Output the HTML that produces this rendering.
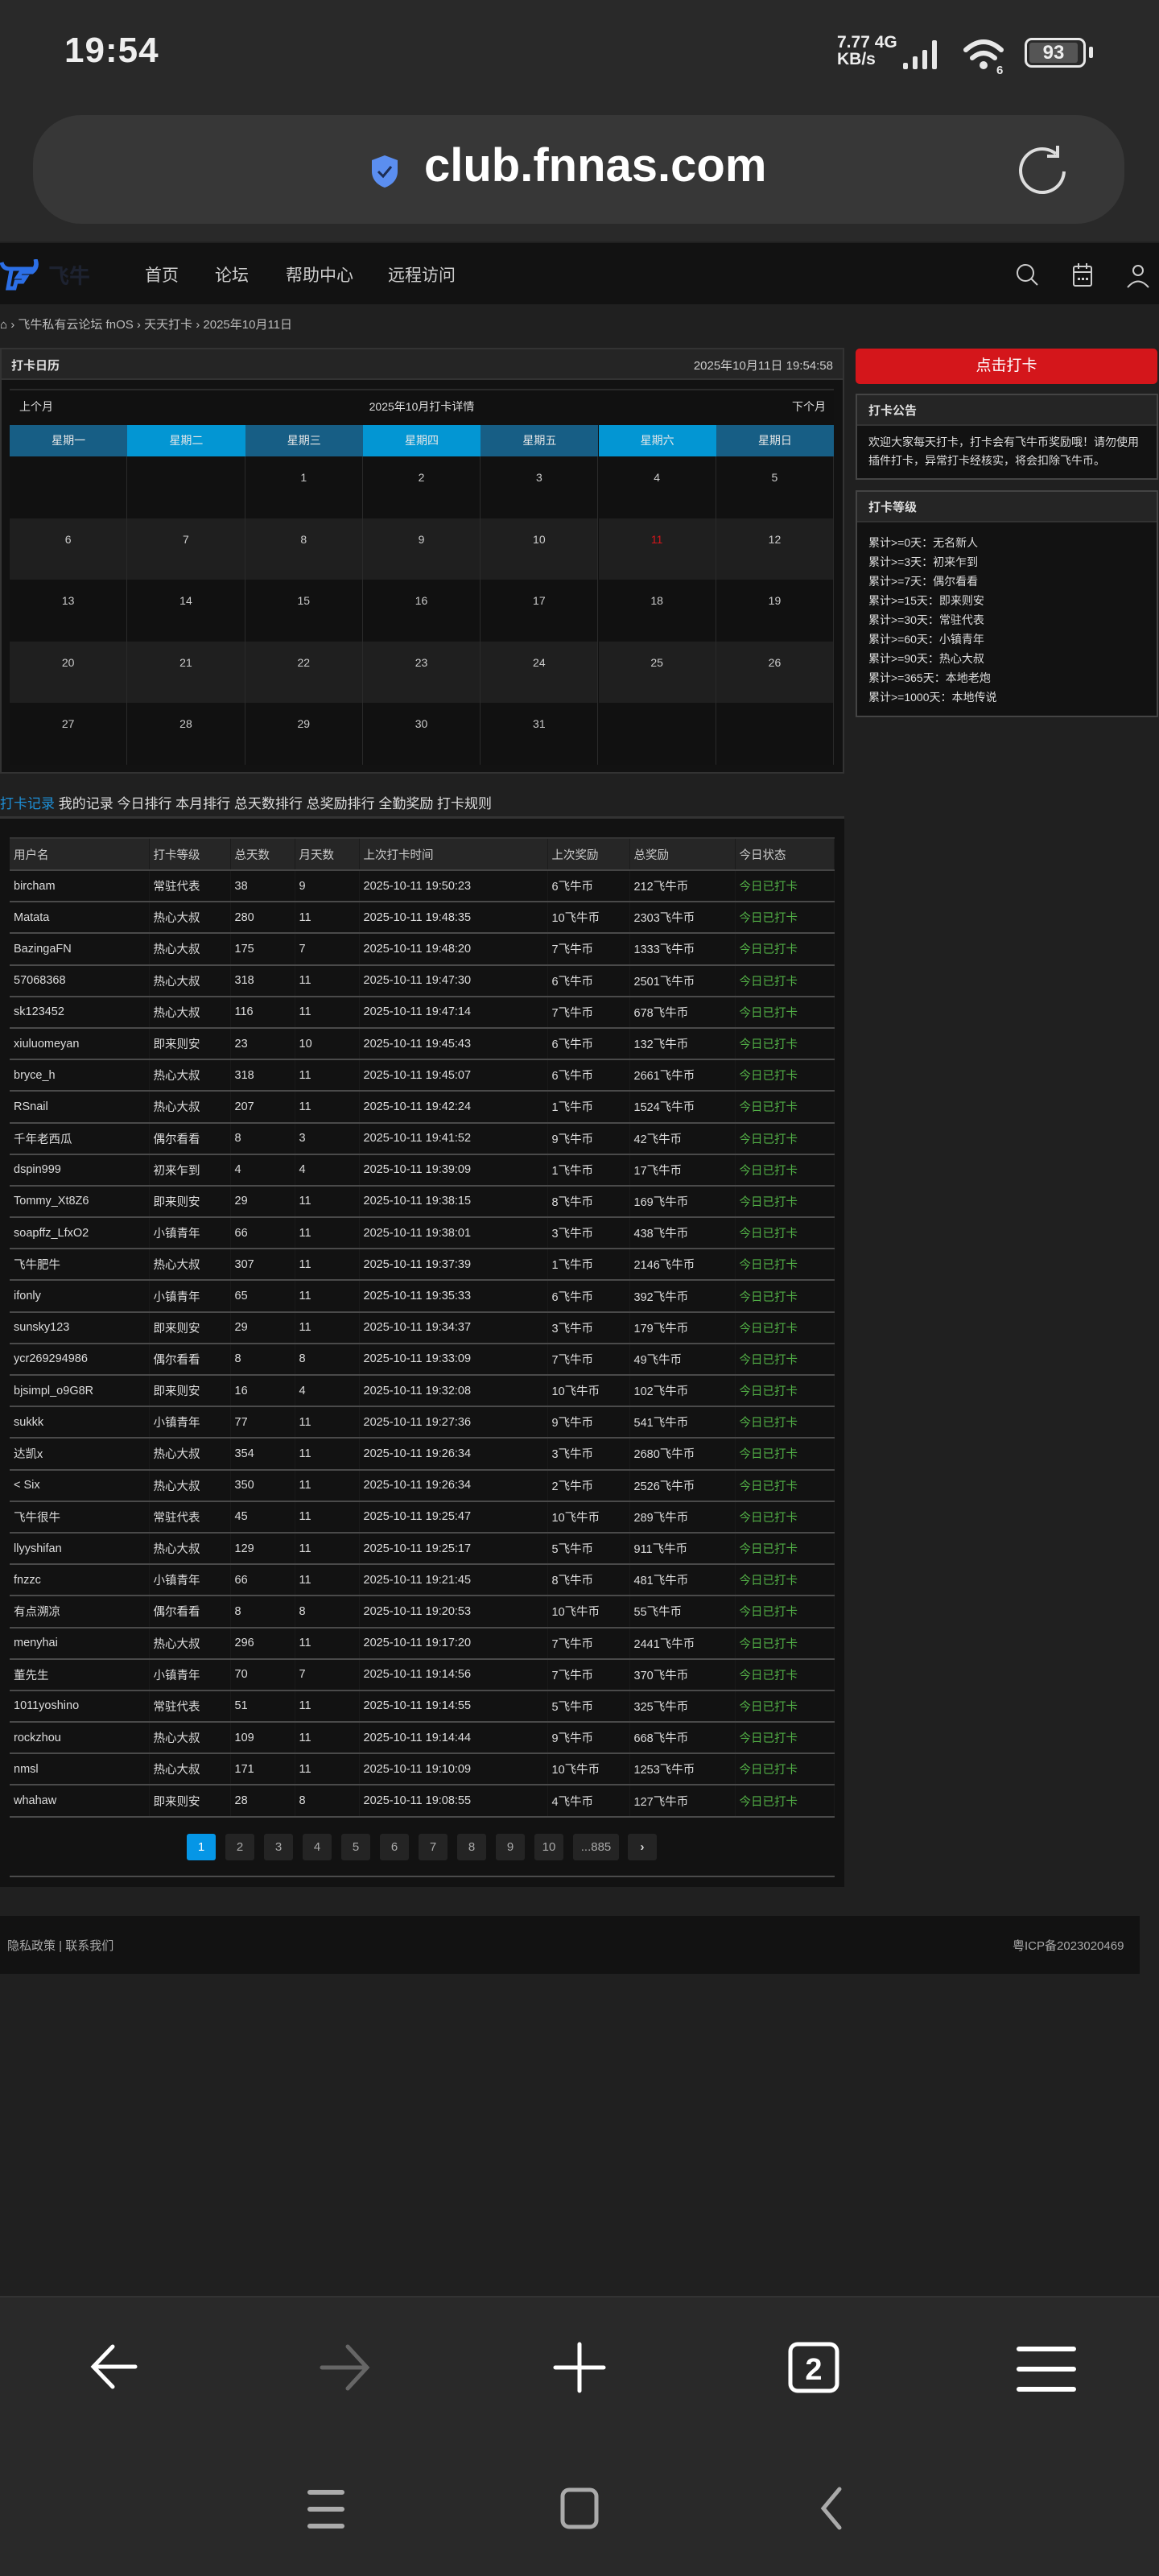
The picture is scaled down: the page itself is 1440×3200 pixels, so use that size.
<!DOCTYPE html>
<html><head><meta charset="utf-8">
<style>
*{margin:0;padding:0;box-sizing:border-box}
body{width:1440px;height:3200px;background:#202020;font-family:"Liberation Sans","Noto Sans CJK SC",sans-serif;color:#ddd;position:relative;overflow:hidden}
.abs{position:absolute}
.status{left:0;top:0;width:1440px;height:300px;background:#292929}
.url{left:41px;top:143px;width:1356px;height:135px;border-radius:60px;background:#373737}
.nav{left:0;top:302px;width:1440px;height:76px;background:#121212}
.nav .it{position:absolute;top:24px;font-size:21px;color:#ccc}
.crumb{left:0;top:392px;font-size:15px;color:#bbb;white-space:nowrap}
.lp{left:0;top:432px;width:1049px;height:529px;background:#121212;border:2px solid #333}
.lph{position:absolute;left:0;top:0;width:1045px;height:38px;background:#252525;border-bottom:2px solid #333;font-size:15px}
.cal{left:12px;top:483px;width:1024px}
.wd{position:absolute;top:43px;height:39px;width:146.3px;text-align:center;line-height:39px;font-size:14px;color:#e8e8e8}
.cell{position:absolute;width:146.3px;height:76.6px;border-right:1px solid #2a2a2a;text-align:center;padding-top:18px;font-size:14px;color:#ccc}
.box{position:absolute;left:1063px;width:376px;background:#121212;border:2px solid #444}
.box .h{height:38px;background:#252525;border-bottom:2px solid #333;font-size:15px;font-weight:bold;padding:8px 14px;color:#ddd}
.rp{left:0;top:1014px;width:1049px;height:1330px;background:#121212;border-top:3px solid #333}
table{position:absolute;left:12px;top:1040px;width:1025px;border-collapse:collapse;font-size:14.5px}
th{height:40px;background:#262626;text-align:left;font-weight:normal;color:#ccc;padding-left:5px;border-top:2px solid #333;border-bottom:2px solid #444;border-right:1px solid #1c1c1c}
td{height:39.2px;padding-left:5px;color:#ddd;border-bottom:2px solid #4a4a4a;border-right:1px solid #1a1a1a}
td.g{color:#52b046}
.pg{position:absolute;top:2278px;height:33px;width:36px;background:#242424;border-radius:3px;color:#aaa;font-size:15px;text-align:center;line-height:33px}
</style></head><body>
<div class="abs status"></div>
<div class="abs" style="left:80px;top:38px;font-size:44px;font-weight:bold;color:#eee;letter-spacing:1px">19:54</div>
<div class="abs" style="left:1040px;top:42px;font-size:21px;font-weight:bold;color:#eee;line-height:21px">7.77 4G<br>KB/s</div>
<svg class="abs" style="left:1120px;top:48px" width="140" height="46" viewBox="0 0 140 46">
<g fill="#e8e8e8"><rect x="2" y="30" width="6" height="8" rx="2"/><rect x="14" y="22" width="6" height="16" rx="2"/><rect x="26" y="14" width="6" height="24" rx="2"/><rect x="38" y="2" width="6" height="36" rx="2"/></g>
<g fill="none" stroke="#e8e8e8" stroke-width="6" stroke-linecap="round"><path d="M80 14 Q102 -6 124 14"/><path d="M88 24 Q102 12 116 24"/></g>
<circle cx="102" cy="33" r="5" fill="#e8e8e8"/><text x="118" y="44" font-size="15" font-weight="bold" fill="#e8e8e8" font-family="Liberation Sans">6</text>
</svg>
<div class="abs" style="left:1273px;top:47px;width:76px;height:37px;border:3px solid #e8e8e8;border-radius:9px;padding:3px"><div style="width:60px;height:25px;background:#555;border-radius:3px;color:#eee;font-weight:bold;font-size:24px;line-height:25px;text-align:center">93</div></div>
<div class="abs" style="left:1353px;top:58px;width:5px;height:14px;background:#e8e8e8;border-radius:2px"></div>
<div class="abs url"></div>
<svg class="abs" style="left:459px;top:191px" width="38" height="44" viewBox="0 0 38 44"><path d="M19 2 L35 8 V22 C35 32 28 39 19 42 C10 39 3 32 3 22 V8 Z" fill="#5b8ef0"/><path d="M11 22 L17 28 L27 16" stroke="#1d2d55" stroke-width="3" fill="none"/></svg>
<div class="abs" style="left:527px;top:172px;font-size:58px;font-weight:bold;color:#fff">club.fnnas.com</div>
<svg class="abs" style="left:1264px;top:177px" width="66" height="70" viewBox="0 0 66 70"><path d="M48 14 A27 27 0 1 0 58 36" fill="none" stroke="#ddd" stroke-width="4"/><path d="M50 4 V17 H37" fill="none" stroke="#ddd" stroke-width="4"/></svg>

<div class="abs nav">
<svg style="position:absolute;left:0;top:20px" width="120" height="40" viewBox="0 0 120 40"><path d="M2 4 Q4 12 12 12 H42 Q46 8 44 0 Q48 10 40 16 H26 L22 22 H32 L28 28 H20 L18 36 H10 L14 14" fill="none" stroke="#2c6fe6" stroke-width="5"/><text x="60" y="30" font-size="26" fill="#1d2230" font-weight="bold" font-family="Noto Sans CJK SC">飞牛</text></svg>
<div class="it" style="left:180px">首页</div><div class="it" style="left:267px">论坛</div><div class="it" style="left:355px">帮助中心</div><div class="it" style="left:482px">远程访问</div>
<svg style="position:absolute;left:1262px;top:25px" width="30" height="30" viewBox="0 0 30 30"><circle cx="12" cy="12" r="10" fill="none" stroke="#ccc" stroke-width="2"/><path d="M19 19 L27 27" stroke="#ccc" stroke-width="2"/></svg>
<svg style="position:absolute;left:1332px;top:24px" width="28" height="32" viewBox="0 0 28 32"><rect x="2" y="5" width="22" height="24" rx="2" fill="none" stroke="#ccc" stroke-width="2"/><path d="M2 12 H24 M8 1 V8 M18 1 V8" stroke="#ccc" stroke-width="2"/><g fill="#ccc"><rect x="7" y="19" width="3" height="3"/><rect x="12" y="19" width="3" height="3"/><rect x="17" y="19" width="3" height="3"/></g></svg>
<svg style="position:absolute;left:1400px;top:26px" width="30" height="30" viewBox="0 0 30 30"><circle cx="14" cy="8" r="6" fill="none" stroke="#ccc" stroke-width="2"/><path d="M1 29 Q14 14 27 29" fill="none" stroke="#ccc" stroke-width="2"/></svg>
</div>

<div class="abs crumb"><span style="color:#ddd">&#8962;</span> &#8250; 飞牛私有云论坛 fnOS &#8250; 天天打卡 &#8250; 2025年10月11日</div>

<div class="abs lp"><div class="lph"><span style="position:absolute;left:12px;top:9px;font-weight:bold">打卡日历</span><span style="position:absolute;right:12px;top:9px;color:#ccc">2025年10月11日 19:54:58</span></div></div>
<div class="abs cal" style="height:466px;background:#111;border-top:2px solid #2a2a2a">
<div style="position:absolute;left:12px;top:10px;font-size:14px">上个月</div>
<div style="position:absolute;left:0;width:1024px;top:10px;font-size:14px;text-align:center">2025年10月打卡详情</div>
<div style="position:absolute;right:10px;top:10px;font-size:14px">下个月</div>
<div class="wd" style="left:0;background:#175e85">星期一</div>
<div class="wd" style="left:146.3px;background:#0396d3">星期二</div>
<div class="wd" style="left:292.6px;background:#175e85">星期三</div>
<div class="wd" style="left:438.9px;background:#0396d3">星期四</div>
<div class="wd" style="left:585.2px;background:#175e85">星期五</div>
<div class="wd" style="left:731.5px;background:#0396d3">星期六</div>
<div class="wd" style="left:877.8px;background:#175e85">星期日</div>
<div id="cells"></div>
</div>

<div style="position:absolute;left:1063px;top:433px;width:375px;height:44px;background:#d4161b;border-radius:5px;color:#fff;font-size:19px;text-align:center;line-height:44px">点击打卡</div>
<div class="box" style="top:489px;height:107px"><div class="h">打卡公告</div><div style="padding:9px 14px;font-size:14px;line-height:23px;color:#ddd">欢迎大家每天打卡，打卡会有飞牛币奖励哦！请勿使用插件打卡，异常打卡经核实，将会扣除飞牛币。</div></div>
<div class="box" style="top:609px;height:282px"><div class="h">打卡等级</div><div style="padding:13px 14px;font-size:14px;line-height:24px;color:#ddd">累计&gt;=0天：无名新人<br>累计&gt;=3天：初来乍到<br>累计&gt;=7天：偶尔看看<br>累计&gt;=15天：即来则安<br>累计&gt;=30天：常驻代表<br>累计&gt;=60天：小镇青年<br>累计&gt;=90天：热心大叔<br>累计&gt;=365天：本地老炮<br>累计&gt;=1000天：本地传说</div></div>

<div class="abs" style="left:0;top:984px;font-size:17px;color:#ddd;white-space:nowrap"><span style="color:#1e8fd6">打卡记录</span> 我的记录 今日排行 本月排行 总天数排行 总奖励排行 全勤奖励 打卡规则</div>
<div class="abs rp"></div>
<table id="tb"><tr><th style="width:173px">用户名</th><th style="width:101px">打卡等级</th><th style="width:80px">总天数</th><th style="width:80px">月天数</th><th style="width:234px">上次打卡时间</th><th style="width:102px">上次奖励</th><th style="width:131px">总奖励</th><th>今日状态</th></tr></table>
<div id="pgs"></div>
<div class="abs" style="left:12px;top:2330px;width:1025px;height:2px;background:#4a4a4a"></div>

<div class="abs" style="left:0;top:2380px;width:1416px;height:72px;background:#121212"></div>
<div class="abs" style="left:9px;top:2406px;font-size:15px;color:#aaa">隐私政策 | 联系我们</div>
<div class="abs" style="left:1258px;top:2406px;font-size:15px;color:#aaa;white-space:nowrap;width:158px;overflow:hidden">粤ICP备2023020469</div>

<div class="abs" style="left:0;top:2852px;width:1440px;height:348px;background:#292929;border-top:2px solid #333"></div>
<svg class="abs" style="left:0;top:2900px" width="1440" height="300" viewBox="0 0 1440 300">
<g stroke="#fff" stroke-width="5" fill="none" stroke-linecap="round">
<path d="M168 40 H116 M140 15 L116 40 L140 65"/>
<path d="M1306 16 H1334 M1306 44 H1334 M1306 70 H1334" stroke-width="0"/>
<path d="M720 12 V70 M690 41 H750"/>
<rect x="982" y="12" width="58" height="58" rx="9" stroke-width="5"/>
<path d="M1266 18 H1334 M1266 43 H1334 M1266 68 H1334" stroke-width="6"/>
</g>
<path d="M400 41 H456 M432 15 L456 41 L432 67" stroke="#666" stroke-width="5" fill="none" stroke-linecap="round"/>
<text x="1011" y="56" font-size="38" font-weight="bold" fill="#fff" text-anchor="middle" font-family="Liberation Sans">2</text>
<g stroke="#aaa" stroke-width="6" fill="none" stroke-linecap="round"><path d="M385 196 H425 M385 217 H425 M385 238 H425"/><rect x="699" y="193" width="42" height="46" rx="8" stroke-width="5"/><path d="M1043 192 L1023 216 L1043 240" stroke-width="5"/></g>
</svg>

<script>
var c='';var d=1;
for(var r=0;r<5;r++){for(var k=0;k<7;k++){var idx=r*7+k;var n=idx-1;var t=(n>=1&&n<=31)?n:'';
var bg=(r%2==1)?'#1f1f1f':'#111';var col=(t==11)?'#d4161b':'#ccc';
c+='<div class="cell" style="left:'+(k*146.3)+'px;top:'+(82+r*76.6)+'px;background:'+bg+';color:'+col+'">'+t+'</div>';}}
document.getElementById('cells').innerHTML=c;
var D=`bircham,常驻代表,38,9,19:50:23,6,212
Matata,热心大叔,280,11,19:48:35,10,2303
BazingaFN,热心大叔,175,7,19:48:20,7,1333
57068368,热心大叔,318,11,19:47:30,6,2501
sk123452,热心大叔,116,11,19:47:14,7,678
xiuluomeyan,即来则安,23,10,19:45:43,6,132
bryce_h,热心大叔,318,11,19:45:07,6,2661
RSnail,热心大叔,207,11,19:42:24,1,1524
千年老西瓜,偶尔看看,8,3,19:41:52,9,42
dspin999,初来乍到,4,4,19:39:09,1,17
Tommy_Xt8Z6,即来则安,29,11,19:38:15,8,169
soapffz_LfxO2,小镇青年,66,11,19:38:01,3,438
飞牛肥牛,热心大叔,307,11,19:37:39,1,2146
ifonly,小镇青年,65,11,19:35:33,6,392
sunsky123,即来则安,29,11,19:34:37,3,179
ycr269294986,偶尔看看,8,8,19:33:09,7,49
bjsimpl_o9G8R,即来则安,16,4,19:32:08,10,102
sukkk,小镇青年,77,11,19:27:36,9,541
达凯x,热心大叔,354,11,19:26:34,3,2680
&lt; Six,热心大叔,350,11,19:26:34,2,2526
飞牛很牛,常驻代表,45,11,19:25:47,10,289
llyyshifan,热心大叔,129,11,19:25:17,5,911
fnzzc,小镇青年,66,11,19:21:45,8,481
有点溯凉,偶尔看看,8,8,19:20:53,10,55
menyhai,热心大叔,296,11,19:17:20,7,2441
董先生,小镇青年,70,7,19:14:56,7,370
1011yoshino,常驻代表,51,11,19:14:55,5,325
rockzhou,热心大叔,109,11,19:14:44,9,668
nmsl,热心大叔,171,11,19:10:09,10,1253
whahaw,即来则安,28,8,19:08:55,4,127`.split('\n');
var h='';D.forEach(function(l){var a=l.split(',');h+='<tr><td>'+a[0]+'</td><td>'+a[1]+'</td><td>'+a[2]+'</td><td>'+a[3]+'</td><td>2025-10-11 '+a[4]+'</td><td>'+a[5]+'飞牛币</td><td>'+a[6]+'飞牛币</td><td class="g">今日已打卡</td></tr>';});
document.getElementById('tb').insertAdjacentHTML('beforeend',h);
var p='';for(var i=1;i<=10;i++){p+='<div class="pg" style="left:'+(232+(i-1)*48)+'px;'+(i==1?'background:#0596e6;color:#fff':'')+'">'+i+'</div>';}
p+='<div class="pg" style="left:712px;width:57px">...885</div><div class="pg" style="left:780px;color:#ddd;font-weight:bold">&#8250;</div>';
document.getElementById('pgs').innerHTML=p;
</script>
</body></html>
